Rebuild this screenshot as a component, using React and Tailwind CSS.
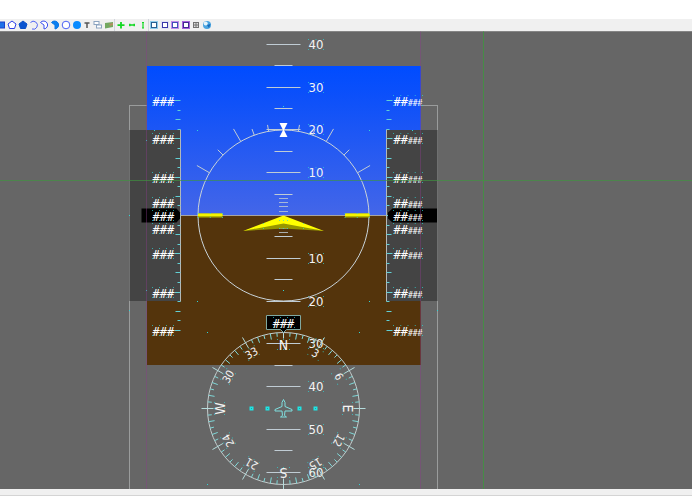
const TOOLS = [
  { name: 'Rectangle', icon: <rect x="0.5" y="2" width="8" height="6" fill="#1c6fe8" stroke="#1a3fc8" /> },
  { name: 'Polygon', icon: <path d="M5 1 L9 4 L7.5 8.5 H2.5 L1 4 Z" fill="#fff" stroke="#2a3fe8" /> },
  { name: 'Filled polygon', icon: <path d="M5 1 L9 4 L7.5 8.5 H2.5 L1 4 Z" fill="#0a55d0" stroke="#0a50c4" /> },
  { name: 'Arc', icon: <path d="M1.5 2.5 A4 4 0 1 1 3 9" fill="none" stroke="#5064f4" /> },
  { name: 'Pie', icon: <path d="M1.5 2.5 A4 4 0 1 1 5 9 L5 5 Z" fill="#fff" stroke="#3a50f0" /> },
  { name: 'Filled pie', icon: <path d="M1.5 2.5 A4 4 0 1 1 5 9 L5 5 Z" fill="#0a80f0" stroke="#0a78e8" /> },
  { name: 'Ellipse', icon: <circle cx="5" cy="5" r="3.8" fill="#fff" stroke="#4a60f4" /> },
  { name: 'Filled ellipse', icon: <circle cx="5" cy="5" r="4" fill="#0a8cff" /> },
  { name: 'Text', icon: <path d="M2.5 3 H7.5 M5 3 V8" fill="none" stroke="#555" strokeWidth="1.5" /> },
  {
    name: 'Group',
    icon: (
      <g fill="#fff" stroke="#8ca4c0">
        <rect x="1" y="1.5" width="5" height="3" />
        <rect x="3.5" y="5" width="5" height="3" />
      </g>
    ),
  },
  {
    name: 'Image',
    icon: (
      <g>
        <path d="M1 3 L9 2 V7 L1 8.5 Z" fill="#74a860" />
        <path d="M5 4 L9 3 V5 L6 6 Z" fill="#b09060" />
      </g>
    ),
  },
]

const MOVES = [
  { name: 'Move freely', icon: <path d="M5 2 V8.5 M1.5 5.2 H8.5" stroke="#10d820" strokeWidth="1.8" /> },
  { name: 'Move horizontally', icon: <path d="M2 5 H8 M2.8 3.8 V6.2 M7.2 3.8 V6.2" stroke="#10d820" strokeWidth="1.4" /> },
  { name: 'Move vertically', icon: <path d="M5 2 V8.5 M4 2.5 H6 M4 8 H6" stroke="#10d820" strokeWidth="1.2" /> },
]

const VIEWS = [
  { name: 'Bounds', icon: <Frame inner="#2a5f90" outer="#8fcdec" /> },
  { name: 'Outline', icon: <Frame inner="#3838a8" outer="#e0e2f4" /> },
  { name: 'Selection', icon: <Frame inner="#4050b8" outer="#c48cea" /> },
  { name: 'Margins', icon: <Frame inner="#402890" outer="#a860dc" /> },
  {
    name: 'Grid',
    icon: (
      <g>
        <rect x="2" y="2" width="6" height="6" fill="#ddd" />
        <path d="M2.5 2 V8 M5 2 V8 M7.5 2 V8 M2 2.5 H8 M2 5 H8 M2 7.5 H8" fill="none" stroke="#707070" />
      </g>
    ),
  },
  {
    name: 'World',
    icon: (
      <g>
        <circle cx="5" cy="5" r="4" fill="#4aa4e0" />
        <circle cx="3.7" cy="3.5" r="2" fill="#e4f4fc" />
        <path d="M5 5 L8.5 4 L7 8 Z" fill="#1468b8" />
      </g>
    ),
  },
]

const LIGHT = '#c0ccd4'
const CYAN = '#2fd6d6'
const SANS = 'DejaVu Sans Condensed, DejaVu Sans, sans-serif'
const MONO = 'DejaVu Sans Mono, monospace'
const DEG = 42.8
const TAPE_STEP = 9.58

function Frame({ inner, outer }) {
  return (
    <g>
      <rect x="1" y="1" width="8" height="8" fill={outer} />
      <rect x="2.5" y="2.5" width="5" height="5" fill="#fff" stroke={inner} />
    </g>
  )
}

function ToolGroup({ tools, className }) {
  return (
    <div className={`flex shrink-0 ${className}`}>
      {tools.map(t => (
        <button key={t.name} type="button" aria-label={t.name} className="flex min-w-0 flex-1 h-3 items-center justify-center">
          <svg width="10" height="10" viewBox="0 0 10 10" className="shrink-0" aria-hidden="true">{t.icon}</svg>
        </button>
      ))}
    </div>
  )
}

function range(from, to) {
  return Array.from({ length: to - from + 1 }, (_, i) => from + i)
}

function polar(r, deg) {
  const a = (deg * Math.PI) / 180
  return [r * Math.sin(a), -r * Math.cos(a)]
}

function Ray({ from, to, deg, ...rest }) {
  const [x1, y1] = polar(from, deg)
  const [x2, y2] = polar(to, deg)
  return <line x1={x1} y1={y1} x2={x2} y2={y2} {...rest} />
}

// small anchor points shown around an object's box
function Handles({ x, y, w, h, cols = 1 }) {
  const xs = range(0, cols).map(i => x + (w * i) / cols)
  return (
    <g fill={CYAN} opacity="0.7">
      {xs.map(px => [y, y + h].map(py => (
        <rect key={`${px},${py}`} x={px - 0.5} y={py - 0.5} width="1" height="1" />
      )))}
    </g>
  )
}

function PitchLadder() {
  // half steps of ten degrees, positive is up
  const rows = [8, 7, 6, 5, 4, 3, 2, 1, -1, -2, -3, -4, -6, -7, -8, -10, -11, -12]
  return (
    <g>
      {rows.map(n => {
        const y = Math.round((-n * DEG) / 2)
        const half = n % 2 === 0 ? 17 : 9
        return (
          <g key={n}>
            <line x1={-half} x2={half} y1={y} y2={y} stroke={LIGHT} />
            {n % 2 === 0 && (
              <g>
                <Handles x={25} y={y - 5} w={15} h={10} cols={2} />
                <text x="25" y={y + 4} fontSize="13" fill="#f4f4f4">{Math.abs(n) * 5}</text>
              </g>
            )}
          </g>
        )
      })}
      {[-4, -3, -2, -1, 3, 4].map(n => (
        <line key={n} x1="-4.5" x2="4.5" y1={Math.round(n * 4.28)} y2={Math.round(n * 4.28)} stroke={LIGHT} opacity="0.8" />
      ))}
    </g>
  )
}

function BankScale() {
  const ticks = [[10, 92], [20, 92], [30, 100], [45, 93], [60, 100]]
  return (
    <g stroke={LIGHT}>
      <circle r="85.5" fill="none" stroke="#c8d2d8" />
      {ticks.map(([deg, to]) => [deg, -deg].map(d => <Ray key={d} from={85.5} to={to} deg={d} />))}
      <path d="M-4 -92.5 H4 L0.5 -85.5 H-0.5 Z M-4 -78.5 H4 L0.5 -85.5 H-0.5 Z" fill="#fff" stroke="none" />
    </g>
  )
}

function Tape({ side }) {
  const left = side === 'left'
  const axis = left ? -103 : 103
  const dir = left ? -1 : 1
  const values = [-12, -8, -4, 4, 8, 12].map(n => n * TAPE_STEP).concat([-13, 0, 13])
  return (
    <g>
      <rect x={left ? -154 : 103} y="-85.5" width="51" height="171" fill="#444" />
      <line x1={axis} x2={axis} y1="-86" y2="86" stroke="#b4b8b8" />
      {range(-12, 12).map(n => {
        const len = n % 4 === 0 ? 6 : n % 2 === 0 ? 5 : 3
        const y = Math.round(n * TAPE_STEP)
        return <line key={n} x1={axis} x2={axis + dir * len} y1={y} y2={y} stroke="#62d0d4" />
      })}
      {left
        ? <path d="M-142 -7 H-107 L-103.5 -3 V3 L-107 7 H-142 Z" fill="#000" />
        : <path d="M153.5 -7 H109 L104.5 -3 V3 L109 7 H153.5 Z" fill="#000" />}
      {values.map(v => {
        const y = Math.round(v)
        return (
          <g key={v}>
            <Handles x={left ? -131 : 110} y={y - 5} w={left ? 21 : 29} h={10} cols={left ? 3 : 4} />
            {left ? (
              <text x="-131" y={y + 5} fontSize="12" fill="#fff" fontFamily={MONO}>###</text>
            ) : (
              <text x="110" y={y + 5} fontSize="12" fill="#fff" fontFamily={MONO}>
                ##<tspan fontSize="8">###</tspan>
              </text>
            )}
          </g>
        )
      })}
    </g>
  )
}

function AircraftSymbol() {
  return (
    <g>
      {[-85.5, 61.5].map(x => (
        <g key={x}>
          <rect x={x} y="-2" width="24.5" height="4" fill="#b4b400" />
          <rect x={x} y="-2" width="24.5" height="2.5" fill="#f4f400" />
          <Handles x={x} y={-2} w={24.5} h={4} cols={2} />
        </g>
      ))}
      <path d="M0 6 L40.5 15.5 L0 13 L-40.5 15.5 Z" fill="#969600" />
      <path d="M0 0 L40.5 15.5 L0 8 L-40.5 15.5 Z" fill="#ff0" />
      <Handles x={-20} y={8} w={40} h={5} />
      <Handles x={-4} y={5} w={8} h={8} cols={2} />
    </g>
  )
}

function Compass() {
  const labels = ['N', '3', '6', 'E', '12', '15', 'S', '21', '24', 'W', '30', '33']
  return (
    <g>
      <circle r="76" fill="none" stroke="#c4cccc" />
      {range(0, 71).map(n => {
        const major = n % 6 === 0
        return (
          <Ray
            key={n}
            from={n % 2 === 0 ? 70 : 72}
            to={major ? 82 : 76}
            deg={n * 5}
            stroke={major ? '#b4dcdc' : '#7fd8d8'}
          />
        )
      })}
      {labels.map((label, i) => {
        const cardinal = i % 3 === 0
        return (
          <g key={label} transform={`rotate(${i * 30})`}>
            <Handles x={-6} y={-69} w={12} h={10} cols={2} />
            <text y={cardinal ? -59 : -60} fontSize={cardinal ? 14 : 11} textAnchor="middle" fill="#f4f4f4">{label}</text>
          </g>
        )
      })}
      {[-32, -16, 16, 32].map(x => (
        <g key={x}>
          <rect x={x - 2} y="-2" width="4" height="4" fill="#1fe4e4" />
          <rect x={x - 0.5} y="-0.5" width="1" height="1" fill="#2a9c9c" />
        </g>
      ))}
      <path
        d="M0 -9 L-1.5 -6 V-2 L-8.5 1 V2.5 H-1.5 L-1 7 L-3 8.5 H3 L1 7 L1.5 2.5 H8.5 V1 L1.5 -2 V-6 Z"
        fill="none"
        stroke="#7fe0e0"
      />
    </g>
  )
}

function HeadingBox() {
  return (
    <g>
      <path d="M-17 100 H17 V114 H3 L0 117 L-3 114 H-17 Z" fill="#000" stroke="#80a8a0" />
      <Handles x={-10} y={102} w={21} h={10} cols={3} />
      <text y="112" fontSize="12" textAnchor="middle" fill="#fff" fontFamily={MONO}>###</text>
    </g>
  )
}

function Display() {
  const points = [[-86, -85], [86, -85], [-129, -85], [129, -85], [-86, 86], [86, 86], [-76, 117], [76, 117], [-76, 269], [76, 269], [0, 75], [0, -109], [-137, 75], [-154, 95], [154, 95], [-154, 0], [-137, -75]]
  return (
    <svg className="block w-full h-[458px]" role="img" aria-label="Primary flight display" fontFamily={SANS}>
      <defs>
        <linearGradient id="sky" x1="0" y1="0" x2="0" y2="1">
          <stop offset="0" stopColor="#004cff" />
          <stop offset="0.2" stopColor="#0c50fa" />
          <stop offset="1" stopColor="#4466e8" />
        </linearGradient>
      </defs>
      <line x1="0" x2="100%" y1="0.5" y2="0.5" stroke="#858585" />
      <g transform="translate(283.5 184.5)">
        <rect x="-154" y="-110" width="308" height="420" fill="none" stroke="#9a9c9c" />
        <rect x="-136.5" y="-149.5" width="274" height="150" fill="url(#sky)" />
        <rect x="-136.5" y="0.5" width="274" height="149" fill="#54340c" />
        <line x1="-103" x2="103" y1="0" y2="0" stroke="#a8a4a0" />
        <PitchLadder />
        <BankScale />
        <AircraftSymbol />
        <Tape side="left" />
        <Tape side="right" />
        <g transform="translate(0 193)">
          <Compass />
        </g>
        <HeadingBox />
        {points.map(([x, y]) => (
          <rect key={`${x},${y}`} x={x - 0.5} y={y - 0.5} width="1" height="1" fill={CYAN} />
        ))}
        <line x1="-137" x2="-137" y1="-184" y2="274" stroke="#8c3c8c" opacity="0.4" />
        <line x1="137" x2="137" y1="-184" y2="274" stroke="#8c3c8c" opacity="0.4" />
        <line x1="200" x2="200" y1="-184" y2="274" stroke="#3f963f" opacity="0.8" />
      </g>
      <line x1="0" x2="100%" y1="149.5" y2="149.5" stroke="#3f963f" opacity="0.65" />
    </svg>
  )
}

export default function App() {
  return (
    <div className="min-h-screen bg-white pt-[19px]">
      <div role="toolbar" aria-label="Drawing tools" className="flex h-3 items-center bg-[#f0f0f0] overflow-hidden">
        <ToolGroup tools={TOOLS} className="-ml-1 w-[118px]" />
        <ToolGroup tools={MOVES} className="w-[34px] border-l border-gray-300" />
        <ToolGroup tools={VIEWS} className="w-[64px] border-l border-gray-300" />
      </div>
      <main className="bg-[#666]">
        <Display />
      </main>
      <footer className="h-[7px] bg-[#f0f0f0] border-b border-[#d4d4d4]" />
    </div>
  )
}
